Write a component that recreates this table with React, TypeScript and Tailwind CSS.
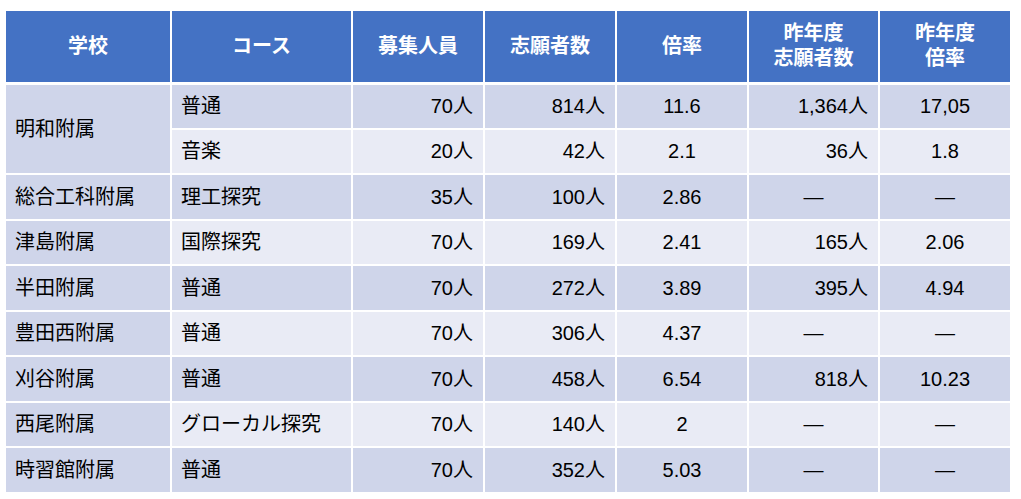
import React from "react";

interface Row {
  school?: string;
  span?: number;
  course: string;
  quota: string;
  applicants: string;
  ratio: string;
  lastApplicants: string;
  lastRatio: string;
}

const rows: Row[] = [
  { school: "明和附属", span: 2, course: "普通", quota: "70人", applicants: "814人", ratio: "11.6", lastApplicants: "1,364人", lastRatio: "17,05" },
  { course: "音楽", quota: "20人", applicants: "42人", ratio: "2.1", lastApplicants: "36人", lastRatio: "1.8" },
  { school: "総合工科附属", course: "理工探究", quota: "35人", applicants: "100人", ratio: "2.86", lastApplicants: "—", lastRatio: "—" },
  { school: "津島附属", course: "国際探究", quota: "70人", applicants: "169人", ratio: "2.41", lastApplicants: "165人", lastRatio: "2.06" },
  { school: "半田附属", course: "普通", quota: "70人", applicants: "272人", ratio: "3.89", lastApplicants: "395人", lastRatio: "4.94" },
  { school: "豊田西附属", course: "普通", quota: "70人", applicants: "306人", ratio: "4.37", lastApplicants: "—", lastRatio: "—" },
  { school: "刈谷附属", course: "普通", quota: "70人", applicants: "458人", ratio: "6.54", lastApplicants: "818人", lastRatio: "10.23" },
  { school: "西尾附属", course: "グローカル探究", quota: "70人", applicants: "140人", ratio: "2", lastApplicants: "—", lastRatio: "—" },
  { school: "時習館附属", course: "普通", quota: "70人", applicants: "352人", ratio: "5.03", lastApplicants: "—", lastRatio: "—" },
];

export default function App() {
  return (
    <div className="min-h-screen w-[1021px] bg-white pt-[9px] pl-[4px] font-['Liberation_Sans','Noto_Sans_CJK_JP',sans-serif] text-[20px] text-black">
      <table className="w-[1006px] table-fixed border-collapse">
        <colgroup>
          <col className="w-[166px]" />
          <col className="w-[181px]" />
          <col className="w-[132px]" />
          <col className="w-[132px]" />
          <col className="w-[132px]" />
          <col className="w-[131px]" />
          <col className="w-[132px]" />
        </colgroup>
        <thead>
          <tr className="h-[73px] bg-[#4472C4] font-bold text-white leading-[25px]">
            <th className="border-2 border-b-[3px] border-white">学校</th>
            <th className="border-2 border-b-[3px] border-white">コース</th>
            <th className="border-2 border-b-[3px] border-white">募集人員</th>
            <th className="border-2 border-b-[3px] border-white">志願者数</th>
            <th className="border-2 border-b-[3px] border-white">倍率</th>
            <th className="border-2 border-b-[3px] border-white">
              昨年度
              <br />
              志願者数
            </th>
            <th className="border-2 border-b-[3px] border-white">
              昨年度
              <br />
              倍率
            </th>
          </tr>
        </thead>
        <tbody>
          {rows.map((r, i) => {
            const bg = i % 2 === 0 ? "bg-[#CFD5EA]" : "bg-[#E9EBF5]";
            const dashLast = r.lastApplicants === "—";
            return (
              <tr key={i} className={`h-[45.5px] ${bg}`}>
                {r.school && (
                  <td rowSpan={r.span ?? 1} className="border-2 border-white bg-[#CFD5EA] pl-[9px]">
                    {r.school}
                  </td>
                )}
                <td className="border-2 border-white pl-[9px]">{r.course}</td>
                <td className="border-2 border-white pr-[10px] text-right">{r.quota}</td>
                <td className="border-2 border-white pr-[10px] text-right">{r.applicants}</td>
                <td className="border-2 border-white text-center">{r.ratio}</td>
                <td className={`border-2 border-white ${dashLast ? "text-center" : "pr-[10px] text-right"}`}>
                  {r.lastApplicants}
                </td>
                <td className="border-2 border-white text-center">{r.lastRatio}</td>
              </tr>
            );
          })}
        </tbody>
      </table>
    </div>
  );
}
